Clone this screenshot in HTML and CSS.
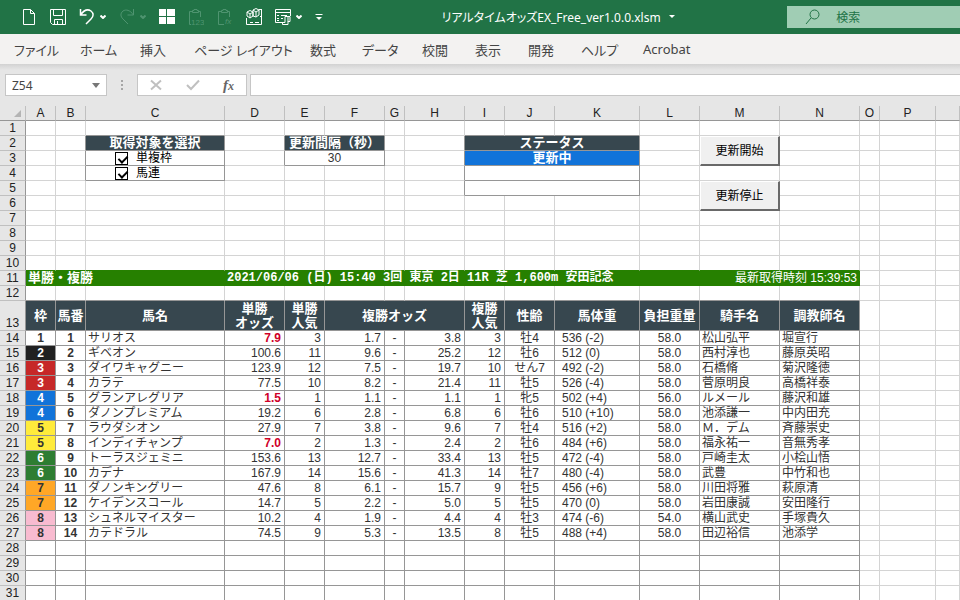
FILE: index.html
```html
<!DOCTYPE html>
<html lang="ja">

<head>
    <meta charset="UTF-8">
    <meta name="viewport" content="width=device-width, initial-scale=1.0">
    <title>リアルタイムオッズEX_Free_ver1.0.0.xlsm</title>
    <link rel="stylesheet" href="styles.css">
</head>

<body>
    <header class="titlebar">
        <div class="quick-access">
            <button type="button" aria-label="新規作成"><svg width="16" height="18" viewBox="0 0 16 18"><path d="M2.5 1.5h7l4 4v11h-11zM9.5 1.5v4h4" /></svg></button>
            <button type="button" aria-label="上書き保存"><svg width="16" height="18" viewBox="0 0 16 18"><path d="M.5 1.5h15v15h-13l-2-2zM3.5 1.5v6h9v-6M4.5 16.5v-5h8v5M7.5 13v3" /></svg></button>
            <div class="with-arrow">
                <button type="button" aria-label="元に戻す"><svg width="16" height="18" viewBox="0 0 16 18"><path class="undo" d="M1.5 1v6h6M1.5 7C5 2 9 1 12 3c3 2.500 2.500 5.500 0 8l-5 5" /></svg></button>
                <button type="button" aria-label="元に戻すの一覧"><svg width="6" height="4" viewBox="0 0 6 4"><path class="thick" d="M.5 .5L3 3L5.500 .5" /></svg></button>
            </div>
            <div class="with-arrow">
                <button type="button" aria-label="やり直し" disabled><svg width="16" height="18" viewBox="0 0 16 18"><path d="M14.500 1v6h-6M14.500 7C11 2 7 1 4 3c-3 2.500-2.500 5.500 0 8l5 5" /></svg></button>
                <button type="button" aria-label="やり直しの一覧" disabled><svg width="6" height="4" viewBox="0 0 6 4"><path class="thick" d="M.5 .5L3 3L5.500 .5" /></svg></button>
            </div>
            <button type="button" aria-label="ウィンドウの整列"><svg width="16" height="18" viewBox="0 0 16 18"><path class="fill" d="M0 1h7v7h-7zM8 1h8v7h-8zM0 9h7v7h-7zM8 9h8v7h-8z" /></svg></button>
            <button type="button" aria-label="値の貼り付け" disabled><svg width="16" height="18" viewBox="0 0 16 18"><path d="M3 16.500H1.500v-13h3M10 3.500h2.500V9M4.500 4.500h6v-2h-1.500v-1h-3v1h-1.500z" /><text x="3" y="17">123</text></svg></button>
            <button type="button" aria-label="数式の貼り付け" disabled><svg width="16" height="18" viewBox="0 0 16 18"><path d="M7 16.500H1.500v-13h3M10 3.500h2.500V9M4.500 4.500h6v-2h-1.500v-1h-3v1h-1.500z" /><text class="slanted" x="8" y="16">fx</text></svg></button>
            <button type="button" aria-label="アドイン"><svg width="16" height="18" viewBox="0 0 16 18"><path d="M.5 10v6.500h15V1.500M13 1.500h3M14 8.500h2M4 14.500h3M9 14.500h4" /><path d="M4 2.500l3 1.500v4l-3 2-3-2v-4zM1 4l3 2 3-2M4 6v4M10 .5l3 1.500v5l-3 2-3-1v-6zM7 2l3 2 3-2M10 4v5" /></svg></button>
            <div class="with-arrow">
                <button type="button" aria-label="フォーム"><svg width="16" height="18" viewBox="0 0 16 18"><path d="M8 14.500H.5v-13h15V8M.5 4.500h15M2 7.500h2M6 7.500h6M2 10.500h2M6 10.500h2M2 12.500h2" /><path d="M10 8.500h5v5h-2v3H7.500v-2h2.500zM13 14v-5" /></svg></button>
                <button type="button" aria-label="フォームの一覧"><svg width="6" height="4" viewBox="0 0 6 4"><path class="thick" d="M.5 .5L3 3L5.500 .5" /></svg></button>
            </div>
            <button type="button" aria-label="クイック アクセスのカスタマイズ"><svg width="8" height="8" viewBox="0 0 8 8"><path d="M.5 1.500h7" /><path class="fill" d="M1 4h6L4 7z" /></svg></button>
        </div>
        <button type="button" class="doc-title">リアルタイムオッズEX_Free_ver1.0.0.xlsm <svg width="6" height="4" viewBox="0 0 6 4"><path class="fill" d="M0 0h6L3 3z" /></svg></button>
        <label class="search">
            <svg width="16" height="16" viewBox="0 0 16 16"><circle cx="9.500" cy="5.500" r="4.500" /><path d="M6 9L1 15" /></svg>
            <input type="text" placeholder="検索">
        </label>
    </header>

    <nav class="tabs">
        <button type="button">ファイル</button>
        <button type="button">ホーム</button>
        <button type="button">挿入</button>
        <button type="button">ページ レイアウト</button>
        <button type="button">数式</button>
        <button type="button">データ</button>
        <button type="button">校閲</button>
        <button type="button">表示</button>
        <button type="button">開発</button>
        <button type="button">ヘルプ</button>
        <button type="button">Acrobat</button>
    </nav>

    <div class="formula-bar">
        <div class="name-box">
            <input type="text" value="Z54" aria-label="名前ボックス">
            <button type="button" aria-label="名前の一覧"><svg width="8" height="5" viewBox="0 0 8 5"><path d="M0 0h8L4 5z" /></svg></button>
        </div>
        <span class="grip"></span>
        <div class="formula-buttons">
            <button type="button" aria-label="キャンセル" disabled><svg width="12" height="12" viewBox="0 0 12 12"><path d="M1 1.500l10 9M11 1.500l-10 9" /></svg></button>
            <button type="button" aria-label="入力" disabled><svg width="14" height="12" viewBox="0 0 14 12"><path class="check" d="M1 6l4 4L13 1.500" /></svg></button>
            <button type="button" class="fx" aria-label="関数の挿入"><i>f</i><i class="x">x</i></button>
        </div>
        <input type="text" class="formula-input" aria-label="数式バー">
    </div>

    <table class="sheet" id="sheet">
        <colgroup>
            <col class="w26"><col class="w30"><col class="w30"><col class="w139"><col class="w60"><col class="w40"><col class="w60"><col class="w20"><col class="w60"><col class="w40"><col class="w50"><col class="w85"><col class="w60"><col class="w80"><col class="w80"><col class="w20"><col class="w56"><col>
        </colgroup>
        <thead>
            <tr>
                <th class="corner"><svg width="7" height="7" viewBox="0 0 7 7"><path d="M7 0v7H0z" /></svg></th>
                <th>A</th><th>B</th><th>C</th><th>D</th><th>E</th><th>F</th><th>G</th><th>H</th><th>I</th><th>J</th><th>K</th><th>L</th><th>M</th><th>N</th><th>O</th><th>P</th><th></th>
            </tr>
        </thead>
        <tbody>
            <tr>
                <th>1</th><td></td><td></td><td class="eb"></td><td></td><td class="eb"></td><td class="eb"></td><td></td><td></td><td class="eb"></td><td class="eb"></td><td class="eb"></td><td></td><td></td><td></td><td></td><td></td><td></td>
            </tr>
            <tr>
                <th>2</th><td></td><td class="er"></td><td class="box head">取得対象を選択</td><td class="er"></td><td class="box head" colspan="2">更新間隔（秒）</td><td></td><td class="er"></td><td class="box head" colspan="3">ステータス</td><td></td>
                <td class="button-cell" rowspan="2"><button type="button">更新開始</button></td><td></td><td></td><td></td><td></td>
            </tr>
            <tr>
                <th>3</th><td></td><td class="er"></td><td class="box"><label class="check-label"><input type="checkbox" checked>単複枠</label></td><td class="er"></td><td class="box center" colspan="2">30</td><td></td><td class="er"></td><td class="box running" colspan="3">更新中</td><td></td><td></td><td></td><td></td><td></td>
            </tr>
            <tr>
                <th>4</th><td></td><td class="er"></td><td class="box"><label class="check-label"><input type="checkbox" checked>馬連</label></td><td></td><td></td><td></td><td></td><td class="er"></td><td class="box" colspan="3"></td><td></td><td></td><td></td><td></td><td></td><td></td>
            </tr>
            <tr>
                <th>5</th><td></td><td></td><td></td><td></td><td></td><td></td><td></td><td class="er"></td><td class="box" colspan="3"></td><td></td>
                <td class="button-cell" rowspan="2"><button type="button">更新停止</button></td><td></td><td></td><td></td><td></td>
            </tr>
            <tr>
                <th>6</th><td></td><td></td><td></td><td></td><td></td><td></td><td></td><td></td><td></td><td></td><td></td><td></td><td></td><td></td><td></td><td></td>
            </tr>
            <tr>
                <th>7</th><td></td><td></td><td></td><td></td><td></td><td></td><td></td><td></td><td></td><td></td><td></td><td></td><td></td><td></td><td></td><td></td><td></td>
            </tr>
            <tr>
                <th>8</th><td></td><td></td><td></td><td></td><td></td><td></td><td></td><td></td><td></td><td></td><td></td><td></td><td></td><td></td><td></td><td></td><td></td>
            </tr>
            <tr>
                <th>9</th><td></td><td></td><td></td><td></td><td></td><td></td><td></td><td></td><td></td><td></td><td></td><td></td><td></td><td></td><td></td><td></td><td></td>
            </tr>
            <tr class="above-race">
                <th>10</th><td></td><td></td><td></td><td></td><td></td><td></td><td></td><td></td><td></td><td></td><td></td><td></td><td></td><td></td><td></td><td></td><td></td>
            </tr>
            <tr>
                <th>11</th><td class="race" colspan="3">単勝・複勝</td><td class="race race-name" colspan="8">2021/06/06 (日) 15:40 3回 東京 2日 11R 芝 1,600m 安田記念</td><td class="race updated" colspan="3">最新取得時刻 15:39:53</td><td></td><td></td><td></td>
            </tr>
            <tr class="above-table">
                <th>12</th><td></td><td></td><td></td><td></td><td></td><td></td><td></td><td></td><td></td><td></td><td></td><td></td><td></td><td></td><td></td><td></td><td></td>
            </tr>
            <tr class="tall">
                <th>13</th><td class="box head">枠</td><td class="box head">馬番</td><td class="box head">馬名</td><td class="box head">単勝<br>オッズ</td><td class="box head">単勝<br>人気</td><td class="box head" colspan="3">複勝オッズ</td><td class="box head">複勝<br>人気</td><td class="box head">性齢</td><td class="box head">馬体重</td><td class="box head">負担重量</td><td class="box head">騎手名</td><td class="box head">調教師名</td><td></td><td></td><td></td>
            </tr>
        </tbody>
        <tbody id="horses">
            <!-- Horse rows will be inserted here -->
        </tbody>
    </table>

    <script>
        const FIRST_ROW = 14;
        const LAST_ROW = 31;

        // 枠, 馬名, 単勝, 人気, 複勝下限, 複勝上限, 人気, 性齢, 馬体重, 負担重量, 騎手, 調教師
        const horses = [
            [1, 'サリオス', '7.9', 3, '1.7', '3.8', 3, '牡4', '536 (-2)', '58.0', '松山弘平', '堀宣行'],
            [2, 'ギベオン', '100.6', 11, '9.6', '25.2', 12, '牡6', '512 (0)', '58.0', '西村淳也', '藤原英昭'],
            [3, 'ダイワキャグニー', '123.9', 12, '7.5', '19.7', 10, 'せん7', '492 (-2)', '58.0', '石橋脩', '菊沢隆徳'],
            [3, 'カラテ', '77.5', 10, '8.2', '21.4', 11, '牡5', '526 (-4)', '58.0', '菅原明良', '高橋祥泰'],
            [4, 'グランアレグリア', '1.5', 1, '1.1', '1.1', 1, '牝5', '502 (+4)', '56.0', 'ルメール', '藤沢和雄'],
            [4, 'ダノンプレミアム', '19.2', 6, '2.8', '6.8', 6, '牡6', '510 (+10)', '58.0', '池添謙一', '中内田充'],
            [5, 'ラウダシオン', '27.9', 7, '3.8', '9.6', 7, '牡4', '516 (+2)', '58.0', 'Ｍ．デム', '斉藤崇史'],
            [5, 'インディチャンプ', '7.0', 2, '1.3', '2.4', 2, '牡6', '484 (+6)', '58.0', '福永祐一', '音無秀孝'],
            [6, 'トーラスジェミニ', '153.6', 13, '12.7', '33.4', 13, '牡5', '472 (-4)', '58.0', '戸崎圭太', '小桧山悟'],
            [6, 'カデナ', '167.9', 14, '15.6', '41.3', 14, '牡7', '480 (-4)', '58.0', '武豊', '中竹和也'],
            [7, 'ダノンキングリー', '47.6', 8, '6.1', '15.7', 9, '牡5', '456 (+6)', '58.0', '川田将雅', '萩原清'],
            [7, 'ケイデンスコール', '14.7', 5, '2.2', '5.0', 5, '牡5', '470 (0)', '58.0', '岩田康誠', '安田隆行'],
            [8, 'シュネルマイスター', '10.2', 4, '1.9', '4.4', 4, '牡3', '474 (-6)', '54.0', '横山武史', '手塚貴久'],
            [8, 'カテドラル', '74.5', 9, '5.3', '13.5', 8, '牡5', '488 (+4)', '58.0', '田辺裕信', '池添学']
        ];

        const outside = '<td></td><td></td><td></td>';
        const body = document.getElementById('horses');
        let rows = '';

        for (let row = FIRST_ROW; row <= LAST_ROW; row++) {
            const horse = horses[row - FIRST_ROW];
            if (!horse) {
                rows += `<tr><th>${row}</th>${'<td class="box"></td>'.repeat(14)}${outside}</tr>`;
                continue;
            }
            const [waku, name, win, winRank, low, high, placeRank, age, weight, load, jockey, trainer] = horse;
            // Single digit odds are highlighted
            const hot = Number(win) < 10 ? ' hot' : '';
            rows += `
                <tr>
                    <th>${row}</th>
                    <td class="box center bold waku${waku}">${waku}</td>
                    <td class="box center bold">${row - FIRST_ROW + 1}</td>
                    <td class="box">${name}</td>
                    <td class="box num${hot}">${win}</td>
                    <td class="box num">${winRank}</td>
                    <td class="box num">${low}</td>
                    <td class="box center">-</td>
                    <td class="box num">${high}</td>
                    <td class="box num">${placeRank}</td>
                    <td class="box center">${age}</td>
                    <td class="box weight">${weight}</td>
                    <td class="box center">${load}</td>
                    <td class="box">${jockey}</td>
                    <td class="box">${trainer}</td>
                    ${outside}
                </tr>
            `;
        }
        body.innerHTML = rows;
    </script>
</body>

</html>
```
FILE: styles.css
```css
* {
    box-sizing: border-box;
}

body {
    margin: 0;
    font-family: "Noto Sans", "Noto Sans CJK JP", sans-serif;
    font-size: 12px;
    background-color: #fff;
    overflow: hidden;
}

button,
input {
    font: inherit;
    color: inherit;
    margin: 0;
    padding: 0;
    border: none;
    background: none;
}

svg {
    display: block;
}

/* Title bar */
.titlebar {
    display: flex;
    align-items: center;
    height: 34px;
    background-color: #217346;
    color: #fff;
}

.titlebar svg {
    fill: none;
    stroke: currentColor;
}

.titlebar .undo {
    stroke-width: 1.5;
}

.titlebar .thick {
    stroke-width: 2;
}

.titlebar .fill {
    fill: currentColor;
    stroke: none;
}

.quick-access {
    display: flex;
    align-items: center;
    gap: 13px;
    padding-left: 21px;
}

.quick-access button:disabled {
    color: #4f9470;
}

.quick-access text {
    font: 8px "Liberation Sans", sans-serif;
    fill: currentColor;
    stroke: none;
}

.quick-access .slanted {
    font-style: italic;
}

.with-arrow {
    display: flex;
    align-items: center;
    gap: 5px;
}

.doc-title {
    flex: 1;
    display: flex;
    align-items: center;
    justify-content: center;
    gap: 8px;
    padding-left: 6px;
    font-feature-settings: "palt";
}

.search {
    display: flex;
    align-items: center;
    gap: 15px;
    width: 18%;
    height: 22px;
    padding-left: 18px;
    background-color: #a0cdb4;
    color: #217346;
}

.search input {
    flex: 1;
    min-width: 0;
}

.search input::placeholder {
    color: #217346;
    opacity: 1;
}

/* Ribbon tabs */
.tabs {
    display: grid;
    grid-template-columns: 66px 60px 54px 116px 52px 60px 53px 53px 53px 62px auto;
    justify-content: start;
    height: 30px;
    padding-left: 14px;
    background-color: #f3f2f1;
    color: #444;
}

.tabs button {
    font-size: 13px;
    text-align: left;
    white-space: nowrap;
    font-feature-settings: "palt";
}

/* Formula bar */
.formula-bar {
    display: flex;
    align-items: center;
    height: 42px;
    padding-left: 5px;
    background: linear-gradient(#d2d2d2, #e6e6e6 6px);
}

.name-box,
.formula-buttons,
.formula-input {
    height: 22px;
    border: 1px solid #c6c6c6;
    background-color: #fff;
}

.name-box {
    display: flex;
    align-items: center;
    width: 102px;
    padding: 0 6px;
    color: #444;
}

.name-box input {
    flex: 1;
    min-width: 0;
}

.name-box svg {
    fill: #777;
}

.grip {
    width: 2px;
    height: 11px;
    margin: 0 14px;
    background: repeating-linear-gradient(#a6a6a6 0 2px, transparent 2px 4px);
}

.formula-buttons {
    display: flex;
    align-items: center;
    justify-content: space-between;
    width: 110px;
    margin-right: 3px;
    padding: 0 12px;
}

.formula-buttons svg {
    fill: none;
    stroke: #c0c0c0;
    stroke-width: 2;
}

.fx {
    font-family: "Liberation Serif", serif;
    font-size: 15px;
    font-weight: bold;
    line-height: 16px;
    color: #666;
}

.fx .x {
    font-size: 12px;
}

.formula-input {
    flex: 1;
    min-width: 0;
    border-right: none;
}

/* Sheet */
.sheet {
    width: 100%;
    table-layout: fixed;
    border-collapse: separate;
    border-spacing: 0;
    font-family: "Liberation Sans", "Noto Sans CJK JP", sans-serif;
    line-height: 14px;
    color: #333;
}

.w20 { width: 20px; }
.w26 { width: 26px; }
.w30 { width: 30px; }
.w40 { width: 40px; }
.w50 { width: 50px; }
.w56 { width: 56px; }
.w60 { width: 60px; }
.w80 { width: 80px; }
.w85 { width: 85px; }
.w139 { width: 139px; }

th,
td {
    height: 15px;
    padding: 0;
    border-right: 1px solid #d4d4d4;
    border-bottom: 1px solid #d4d4d4;
    text-align: left;
    white-space: nowrap;
}

th {
    background-color: #e6e6e6;
    border-right-color: #c0c0c0;
    border-bottom-color: #c0c0c0;
    font-weight: normal;
    text-align: center;
    vertical-align: bottom;
    color: #222;
}

thead th {
    border-bottom-color: #969696;
}

tbody th {
    border-right-color: #969696;
}

.corner svg {
    margin-left: auto;
    margin-right: 4px;
    margin-bottom: 3px;
    fill: #b4b4b4;
}

td {
    padding-left: 2px;
}

.er {
    border-right-color: #969696;
}

.eb,
.above-table td:nth-child(-n+15) {
    border-bottom-color: #969696;
}

.box {
    border-color: #969696;
}

.head,
.running {
    padding: 0;
    font-size: 13px;
    font-weight: bold;
    text-align: center;
    color: #fff;
}

.head {
    background-color: #37474f;
}

.running {
    background-color: #1173d9;
}

.tall td {
    height: 30px;
}

.center {
    padding: 0;
    text-align: center;
}

.bold {
    font-weight: bold;
}

.num {
    padding-right: 3px;
    text-align: right;
}

.weight {
    padding-left: 7px;
}

.hot {
    font-weight: bold;
    color: #d00028;
}

.check-label {
    display: flex;
    align-items: center;
    gap: 8px;
    height: 14px;
    padding-left: 27px;
    color: #000;
}

.check-label input {
    appearance: none;
    width: 13px;
    height: 13px;
    border: 1px solid #000;
    background-color: #fff;
}

.check-label input:checked::before {
    content: "";
    display: block;
    width: 4px;
    height: 7px;
    margin: 1px 0 0 4px;
    border: solid #000;
    border-width: 0 2px 2px 0;
    transform: rotate(45deg);
}

.button-cell {
    padding: 0;
    border: none;
}

.button-cell button {
    display: block;
    width: 100%;
    height: 30px;
    border: solid;
    border-width: 1px 2px 2px 1px;
    border-color: #fff #696969 #696969 #fff;
    background-color: #f0f0f0;
    color: #000;
}

/* Race banner */
.above-race td:nth-child(-n+15) {
    border-bottom-color: #268000;
}

.race {
    border-color: #268000;
    background-color: #268000;
    font-size: 13px;
    font-weight: bold;
    color: #fff;
}

.race-name {
    font-family: "Liberation Mono", "Noto Sans CJK JP", monospace;
    font-size: 12px;
}

.updated {
    padding-right: 2px;
    font-size: 12px;
    font-weight: normal;
    text-align: right;
}

/* Bracket colours */
.waku2 { background-color: #212121; color: #fff; }
.waku3 { background-color: #c62828; color: #fff; }
.waku4 { background-color: #1173d9; color: #fff; }
.waku5 { background-color: #ffeb3b; }
.waku6 { background-color: #2e7d32; color: #fff; }
.waku7 { background-color: #ffa726; }
.waku8 { background-color: #f8bbd0; }
```
